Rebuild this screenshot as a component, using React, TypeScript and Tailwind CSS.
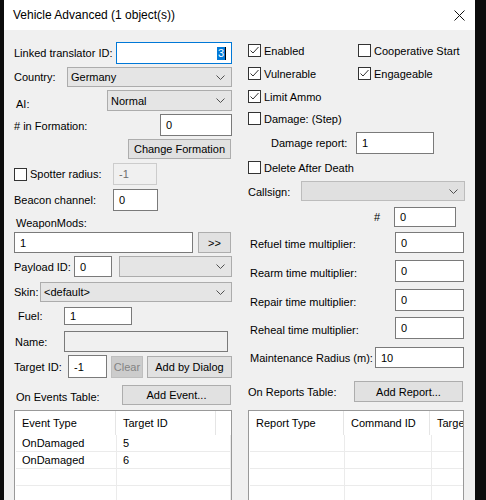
import React from 'react';

type Cls = { className?: string };

function Chevron() {
  return (
    <svg width="9" height="5" viewBox="0 0 9 5" className="shrink-0">
      <polyline points="0.5,0.5 4.5,4.5 8.5,0.5" fill="none" stroke="#505050" strokeWidth="1" />
    </svg>
  );
}

function Combo({ value, disabled, className = '' }: { value?: string; disabled?: boolean } & Cls) {
  return (
    <div
      className={
        'flex items-center justify-between border pl-[3px] pr-[6px] ' +
        (disabled ? 'border-[#bcbcbc] bg-[#e0e0e0] ' : 'border-[#acacac] bg-[#e5e5e5] ') +
        className
      }
    >
      <span>{value}</span>
      <Chevron />
    </div>
  );
}

function Field({ value, disabled, readOnly, className = '' }: { value?: string; disabled?: boolean; readOnly?: boolean } & Cls) {
  let look = 'border-[#7a7a7a] bg-white';
  if (disabled) look = 'border-[#cccccc] bg-[#f0f0f0] text-[#6d6d6d]';
  if (readOnly) look = 'border-[#7a7a7a] bg-[#f0f0f0]';
  return <div className={'flex items-center border pl-[5px] ' + look + ' ' + className}>{value}</div>;
}

function Btn({ label, disabled, className = '' }: { label: string; disabled?: boolean } & Cls) {
  return (
    <div
      className={
        'flex items-center justify-center border ' +
        (disabled ? 'border-[#bfbfbf] bg-[#cccccc] text-[#838383] ' : 'border-[#adadad] bg-[#e1e1e1] ') +
        className
      }
    >
      {label}
    </div>
  );
}

function Check({ label, checked }: { label: string; checked?: boolean }) {
  return (
    <div className="flex items-center">
      <div className="flex h-[13px] w-[13px] items-center justify-center border border-[#333333] bg-white">
        {checked && (
          <svg width="11" height="11" viewBox="0 0 11 11">
            <polyline points="1.5,5.5 4,8 9.5,2" fill="none" stroke="#333333" strokeWidth="1" />
          </svg>
        )}
      </div>
      <span className="ml-[3px]">{label}</span>
    </div>
  );
}

function Grid({
  headers,
  headWidths,
  bodyWidths,
  rows,
  className = '',
}: {
  headers: string[];
  headWidths: string[];
  bodyWidths: string[];
  rows: string[][];
} & Cls) {
  const filled = [...rows];
  while (filled.length < 4) filled.push(['', '']);
  return (
    <div className={'flex-1 overflow-hidden border border-[#999999] bg-white ' + className}>
      <div className="flex h-[24px] items-center whitespace-nowrap">
        {headers.map((h, i) => (
          <div
            key={h}
            className={
              'flex h-full shrink-0 items-center pl-[7px] ' +
              (i < headers.length - 1 ? 'border-r border-[#e5e5e5] ' : '') +
              headWidths[i]
            }
          >
            {h}
          </div>
        ))}
      </div>
      <div className="pl-[1px]">
        {filled.map((r, ri) => (
          <div key={ri} className="flex h-[17px] border-b border-[#ebebeb]">
            <div className={'flex items-center border-r border-[#ebebeb] pl-[6px] ' + bodyWidths[0]}>{r[0]}</div>
            <div className={'flex items-center border-r border-[#ebebeb] pl-[6px] ' + bodyWidths[1]}>{r[1]}</div>
          </div>
        ))}
      </div>
    </div>
  );
}

export default function App() {
  return (
    <div className="flex h-[500px] w-[486px] overflow-hidden bg-[#0c0c0c] pl-[4px] font-['Liberation_Sans',Arial,sans-serif] text-[11px] leading-[14px] text-black">
      <div className="flex h-full w-[471px] flex-col bg-[#f0f0f0]">
        {/* title bar */}
        <div className="flex h-[30px] shrink-0 items-center justify-between bg-white pl-[9px] pr-[10px]">
          <span className="text-[12px]">Vehicle Advanced (1 object(s))</span>
          <svg width="11" height="11" viewBox="0 0 11 11">
            <path d="M0.5 0.5 L10.5 10.5 M10.5 0.5 L0.5 10.5" stroke="#111" strokeWidth="1" />
          </svg>
        </div>

        <div className="flex flex-1 pl-[10px]">
          {/* left column */}
          <div className="flex w-[218px] flex-col">
            <div className="mt-[12px] flex h-[22px] items-center">
              <span className="w-[102px]">Linked translator ID:</span>
              <div className="flex h-full w-[116px] items-center justify-end border border-[#0078d7] bg-white pr-[5px]">
                <span className="bg-[#0078d7] px-[1px] leading-[13px] text-white">3</span>
                <span className="h-[13px] w-px bg-black" />
              </div>
            </div>
            <div className="mt-[3px] flex h-[20px] items-center">
              <span className="w-[53px]">Country:</span>
              <Combo value="Germany" className="h-full w-[165px]" />
            </div>
            <div className="mt-[3px] flex h-[21px]">
              <span className="mb-[0px] w-[93px] self-end pl-[2px]">AI:</span>
              <Combo value="Normal" className="h-full w-[125px]" />
            </div>
            <div className="mt-[3px] flex h-[22px] items-center">
              <span className="w-[146px] pt-[2px]">&#35; in Formation:</span>
              <Field value="0" className="h-full w-[72px]" />
            </div>
            <div className="mt-[3px] flex h-[20px]">
              <Btn label="Change Formation" className="ml-[114px] h-full w-[103px]" />
            </div>
            <div className="mt-[4px] flex h-[22px] items-center">
              <div className="w-[99px]">
                <Check label="Spotter radius:" />
              </div>
              <Field value="-1" disabled className="h-full w-[44px]" />
            </div>
            <div className="mt-[4px] flex h-[22px] items-center">
              <span className="w-[99px]">Beacon channel:</span>
              <Field value="0" className="h-full w-[45px]" />
            </div>
            <div className="mt-[5px] h-[14px] pl-[2px]">WeaponMods:</div>
            <div className="mt-[2px] flex h-[21px] items-center">
              <Field value="1" className="h-full w-[179px]" />
              <Btn label=">>" className="ml-[5px] h-full w-[33px]" />
            </div>
            <div className="mt-[3px] flex h-[21px] items-center">
              <span className="w-[60px]">Payload ID:</span>
              <Field value="0" className="h-full w-[38px]" />
              <Combo className="ml-[7px] h-full w-[113px]" />
            </div>
            <div className="mt-[5px] flex h-[20px] items-center">
              <span className="w-[26px]">Skin:</span>
              <Combo value="<default>" className="h-full w-[192px]" />
            </div>
            <div className="mt-[5px] flex h-[18px] items-center">
              <span className="w-[50px] pl-[4px]">Fuel:</span>
              <Field value="1" className="h-full w-[68px]" />
            </div>
            <div className="mt-[6px] flex h-[21px] items-center">
              <span className="w-[50px] pl-[1px]">Name:</span>
              <Field readOnly className="h-full w-[164px]" />
            </div>
            <div className="mt-[3px] flex h-[23px] items-center">
              <span className="w-[54px]">Target ID:</span>
              <Field value="-1" className="h-full w-[39px]" />
              <Btn label="Clear" disabled className="ml-[4px] h-[22px] w-[32px]" />
              <Btn label="Add by Dialog" className="ml-[4px] h-[22px] w-[85px]" />
            </div>
            <div className="mt-[7px] flex h-[20px] items-center">
              <span className="w-[108px] pl-[2px] pt-[3px]">On Events Table:</span>
              <Btn label="Add Event..." className="h-full w-[109px]" />
            </div>
            <Grid
              className="mt-[5px]"
              headers={['Event Type', 'Target ID', '']}
              headWidths={['w-[101px]', 'w-[100px]', 'w-[15px]']}
              bodyWidths={['w-[101px]', 'w-[114px]']}
              rows={[
                ['OnDamaged', '5'],
                ['OnDamaged', '6'],
              ]}
            />
          </div>

          {/* right column */}
          <div className="ml-[16px] flex w-[217px] flex-col">
            <div className="mt-[14px] flex h-[13px] items-center">
              <div className="w-[110px]">
                <Check label="Enabled" checked />
              </div>
              <Check label="Cooperative Start" />
            </div>
            <div className="mt-[10px] flex h-[13px] items-center">
              <div className="w-[110px]">
                <Check label="Vulnerable" checked />
              </div>
              <Check label="Engageable" checked />
            </div>
            <div className="mt-[10px] flex h-[13px] items-center">
              <Check label="Limit Ammo" checked />
            </div>
            <div className="mt-[9px] flex h-[13px] items-center">
              <Check label="Damage: (Step)" />
            </div>
            <div className="mt-[7px] flex h-[22px] items-center">
              <span className="w-[108px] pl-[23px]">Damage report:</span>
              <Field value="1" className="h-full w-[78px]" />
            </div>
            <div className="mt-[7px] flex h-[13px] items-center">
              <Check label="Delete After Death" />
            </div>
            <div className="mt-[7px] flex h-[20px] items-center">
              <span className="w-[53px] pt-[2px]">Callsign:</span>
              <Combo disabled className="h-full w-[164px]" />
            </div>
            <div className="mt-[6px] flex h-[20px] items-center">
              <span className="w-[146px] pl-[126px]">&#35;</span>
              <Field value="0" className="h-full w-[62px]" />
            </div>
            <div className="mt-[5px] flex h-[21px] items-center">
              <span className="w-[147px] pl-[2px] pt-[3px]">Refuel time multiplier:</span>
              <Field value="0" className="h-full w-[69px]" />
            </div>
            <div className="mt-[7px] flex h-[22px] items-center">
              <span className="w-[147px] pl-[2px] pt-[3px]">Rearm time multiplier:</span>
              <Field value="0" className="h-full w-[69px]" />
            </div>
            <div className="mt-[7px] flex h-[22px] items-center">
              <span className="w-[147px] pl-[2px] pt-[3px]">Repair time multiplier:</span>
              <Field value="0" className="h-full w-[69px]" />
            </div>
            <div className="mt-[6px] flex h-[22px] items-center">
              <span className="w-[147px] pl-[2px] pt-[3px]">Reheal time multiplier:</span>
              <Field value="0" className="h-full w-[69px]" />
            </div>
            <div className="mt-[8px] flex h-[21px] items-center">
              <span className="w-[127px] pl-[2px]">Maintenance Radius (m):</span>
              <Field value="10" className="h-full w-[89px]" />
            </div>
            <div className="mt-[13px] flex h-[21px] items-center">
              <span className="w-[106px] pt-[1px]">On Reports Table:</span>
              <Btn label="Add Report..." className="h-full w-[109px]" />
            </div>
            <Grid
              className="mt-[8px] w-[216px]"
              headers={['Report Type', 'Command ID', 'Target ID']}
              headWidths={['w-[95px]', 'w-[86px]', 'w-[60px]']}
              bodyWidths={['w-[95px]', 'w-[87px]']}
              rows={[]}
            />
          </div>
        </div>
      </div>
    </div>
  );
}
